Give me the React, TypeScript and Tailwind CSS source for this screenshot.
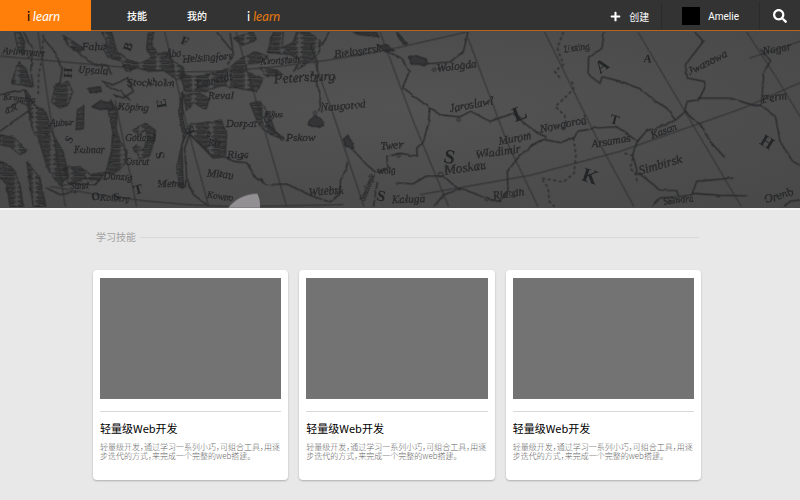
import React from 'react';
import { FaPlus, FaSearch } from 'react-icons/fa';

type Label = [text: string, x: number, y: number, size: number, angle: number];

const labels: Label[] = [
  ['Arimnyan', 6, 78, 32, 3],
  ['Falun', 245, 66, 34, 0],
  ['Upsala', 232, 134, 32, 3],
  ['Stockholm', 382, 174, 34, 0],
  ['Helsingfors', 548, 104, 32, -4],
  ['Åbo', 498, 86, 28, 0],
  ['Köping', 352, 245, 32, 3],
  ['Reval', 624, 214, 34, 0],
  ['Lauwidi', 590, 180, 34, -14],
  ['Aubur', 150, 295, 28, 0],
  ['Kalmar', 222, 374, 30, 0],
  ['Gotland', 376, 340, 28, 0],
  ['Ostrut', 376, 412, 28, 0],
  ['Dorpat', 678, 298, 32, 0],
  ['Riga', 682, 390, 34, 0],
  ['Mitau', 620, 446, 34, 4],
  ['Memel', 474, 478, 32, 0],
  ['Kowno', 620, 508, 28, 8],
  ['a.', 620, 328, 28, 0],
  ['Riv', 625, 354, 28, 0],
  ['Kramma', 8, 216, 28, 5],
  ['d.R', 18, 258, 28, -20],
  ['Sund', 210, 482, 28, 0],
  ['Danzig', 310, 452, 30, 4],
  ['Kolberg', 300, 518, 28, 2],
  ['Kronstadt', 782, 110, 30, -3],
  ['Petersburg', 822, 166, 42, -3],
  ['Bielosersk', 1004, 90, 34, -8],
  ['Naugorod', 962, 250, 34, -5],
  ['Pljus', 795, 266, 26, 2],
  ['Pskow', 858, 338, 34, 0],
  ['Twer', 1142, 366, 34, -5],
  ['Wolg', 1132, 442, 28, -8],
  ['Witebsk', 926, 503, 34, -3],
  ['Wologda', 1312, 132, 34, -7],
  ['Jaroslawl', 1350, 252, 34, -10],
  ['Moskau', 1336, 440, 40, -8],
  ['Wladimir', 1428, 392, 36, -8],
  ['Murom', 1498, 350, 34, -10],
  ['Kaluga', 1176, 526, 34, -2],
  ['Rjasan', 1480, 514, 34, -8],
  ['Smolensk', 1094, 520, 22, -68],
  ['Usting', 1692, 74, 30, -8],
  ['Nowgorod', 1622, 314, 34, -12],
  ['Arsamas', 1776, 360, 34, -10],
  ['Kasan', 1956, 332, 32, -20],
  ['Simbirsk', 1920, 440, 38, -16],
  ['Samara', 1990, 530, 30, -6],
  ['Jwanowa', 2070, 142, 34, -27],
  ['Perm', 2290, 226, 34, -12],
  ['Nagor', 2290, 80, 34, -10],
  ['Orenb', 2296, 526, 36, -16],
];

const capitals: Label[] = [
  ['H', 192, 118, 40, 94],
  ['F', 540, 46, 38, 20],
  ['E', 500, 238, 42, -100],
  ['E', 585, 314, 36, -110],
  ['S', 494, 390, 38, -100],
  ['B', 390, 72, 38, -70],
  ['S', 212, 348, 34, -60],
  ['O', 276, 518, 34, -10],
  ['S', 340, 516, 34, 0],
  ['T', 405, 500, 40, -15],
  ['S', 1328, 402, 60, 12],
  ['S', 1128, 516, 46, 12],
  ['L', 1546, 282, 62, -20],
  ['A', 1800, 138, 52, -35],
  ['K', 1742, 456, 60, 18],
  ['H', 2276, 346, 50, 32],
  ['T', 1828, 284, 40, 15],
  ['A', 1930, 102, 34, 5],
];

/* Baltic coastlines and islands */
const shores = [
  'M305 12 320 40 312 66 325 90 365 98 378 130 412 120 450 130 492 128 530 155 552 150 550 118 520 100 500 72 472 78 455 45 465 12 445 12 440 60 455 90 420 106 385 96 350 70 335 12Z',
  'M540 138 580 146 632 140 690 118 720 92 770 72 800 84 780 104 740 108 735 130 790 150 772 190 718 182 668 172 610 190 555 190Z',
  'M550 200 600 196 628 212 618 244 600 236 580 222 560 250Z',
  'M568 290 642 280 664 276 680 318 676 380 640 386 600 345 568 316Z',
  'M332 215 352 250 348 300 360 340 382 370 372 410 344 440 318 432 334 370 338 310 325 250Z',
  'M398 306 436 286 466 306 462 340 448 384 418 392 398 360 410 350 430 366 446 330 436 306 414 322Z',
  'M58 100 78 122 96 178 62 170 34 168 42 140Z',
  'M168 168 204 160 218 192 204 232 178 240 154 222Z',
  'M232 246 252 232 250 302 228 306Z',
  'M74 186 106 232 140 256 154 310 190 372 206 448 176 470 142 420 118 340 96 300Z',
  'M0 320 44 330 80 370 60 380 30 356 0 350Z',
  'M0 400 40 420 60 470 70 536 30 536 20 470 0 450Z',
  'M80 400 120 450 138 536 100 536 90 470Z',
  'M750 226 780 220 810 264 825 310 845 332 810 318 776 290Z',
  'M820 12 850 12 846 60 880 40 890 12 930 12 962 40 958 74 918 110 880 130 900 96 870 80 830 76 802 74Z',
  'M780 118 830 126 850 140 800 146Z',
  'M548 190 536 250 550 330 530 420 540 480 552 480 548 430 546 350 560 318 548 270Z',
  'M60 12 74 40 70 80 54 66 44 14Z',
  'M190 22 250 60 240 72 204 54Z',
  'M700 30 760 12 770 36 726 52Z',
  'M190 420 240 416 270 440 318 432 300 456 250 452 210 470Z',
];

/* Small filled lakes */
const lakes = [
  'M925 290Q928 268 946 264 968 272 970 292 944 300 925 290Z',
  'M1030 335 1044 322 1062 360 1040 355Z',
  'M1222 88 1244 82 1280 94 1278 110 1240 108Z',
  'M1136 54 1160 50 1180 66 1158 72Z',
  'M260 182 300 176 304 190 270 194Z',
  'M276 236 300 220 330 224 340 242 300 244Z',
  'M1190 12 1222 46 1214 50 1196 28Z',
  'M1060 12 1128 12 1136 26 1080 20Z',
];

const rivers = [
  'M70 12 98 60 92 130 100 176M130 30 170 80 186 130 178 170M212 54 250 84 280 108 322 112 334 140',
  'M0 200 40 190 74 186M0 310 40 280 84 250 100 270M20 240 60 220 90 236M180 470 230 466 280 470 300 456M140 480 180 500 230 492M304 160 340 170 382 150 400 190 370 210 340 200M312 170 360 190 390 216',
  'M568 318 600 350 640 390 676 386 700 400 740 404 768 450 800 470 860 468 910 492 950 510 990 522 1018 500 1022 455 1038 430 1042 402',
  'M568 320 554 360 560 450 580 500 620 530',
  'M930 50 952 102 950 170 962 200 956 250',
  'M960 60 990 12M780 450 790 462M780 236 800 290 850 330',
  'M1160 70 1205 90 1228 130 1208 178 1250 210 1290 240 1330 262 1380 266 1412 250 1470 280 1510 266 1540 256 1566 280 1600 306 1640 330',
  'M1290 240 1284 290 1270 340 1250 360 1252 384 1200 376 1160 386 1164 420 1128 434 1100 410 1056 362',
  'M1188 464 1238 468 1280 444 1330 444 1372 480 1400 486 1464 514 1500 520 1524 490 1522 430 1560 382 1600 350 1628 336',
  'M1380 484 1330 500 1302 536M1278 108 1350 102 1390 70 1404 12',
  'M1590 354 1630 334 1680 344 1724 328 1732 310 1790 300 1850 296 1912 340',
  'M1812 12 1806 60 1766 90 1764 140 1800 166 1806 146 1860 160 1920 182 1970 222 2000 240 2026 276',
  'M1912 340 1940 308 2000 290 2026 276 2054 252 2062 220 2096 216 2114 180 2110 160 2062 150 2056 110 2110 40 2084 12',
  'M2096 210 2190 210 2260 232 2284 232 2292 130 2312 98 2282 64',
  'M2284 232 2326 264 2340 340 2378 400 2400 412',
  'M1912 340 1898 380 1912 432 1960 470 1978 486 2030 488 2036 506 2076 500 2090 460 2200 450M2076 496 2160 502 2246 504',
  'M1956 536 1980 510 2030 506M2054 250 2110 302 2130 340 2174 388M2350 536 2370 520 2400 516',
  'M690 12 700 80 682 110M650 12 694 66M1120 536 1126 500 1132 462',
];

const meridians = [
  'M114 12 146 230 196 536',
  'M345 215 410 536',
  'M494 12 560 290 626 536',
  'M708 12 760 190 860 536',
  'M940 90 1000 260 1092 536',
  'M1140 12 1240 280 1346 536',
  'M1404 30 1520 340 1614 536',
  'M1634 12 1790 330 1902 536',
  'M1914 12 2090 310 2224 536',
  'M2240 12 2330 150 2400 266',
];

const parallels = [
  'M0 84Q250 108 540 132 820 132 1170 64L1400 12',
  'M150 475Q430 530 700 536L1030 530M1260 500 1590 442 1860 370 2230 240 2400 164',
  'M2250 90 2400 40',
];

const borders = [
  'M1690 12 1672 60 1690 110 1664 130 1680 150M1716 160 1720 184 1666 236 1694 262 1700 296',
  'M1720 330 1728 380 1722 436 1690 462 1624 450 1644 480 1648 520 1664 536',
  'M1874 376 1900 384 1890 420 1908 440 1912 468',
  'M130 20 126 90 116 140 114 200',
];

function MapArtwork() {
  return (
    <svg
      className="block h-full w-full"
      viewBox="0 9 2400 531"
      preserveAspectRatio="xMidYMid slice"
      role="img"
      aria-label="Map"
    >
      <defs>
        <pattern id="water" width="53" height="14" patternUnits="userSpaceOnUse">
          <path d="M0 2h20l5 1h22M6 9h37" stroke="#262728" strokeWidth="4" fill="none" />
        </pattern>
        <radialGradient id="light" cx="50%" cy="45%" r="75%">
          <stop offset="0" stopColor="#535353" />
          <stop offset="1" stopColor="#484848" />
        </radialGradient>
        <filter id="rough" x="0" y="0" width="100%" height="100%">
          <feTurbulence type="fractalNoise" baseFrequency="0.04" numOctaves="2" seed="4" />
          <feDisplacementMap in="SourceGraphic" scale="8" xChannelSelector="R" yChannelSelector="G" />
        </filter>
        <filter id="soft" x="0" y="0" width="100%" height="100%">
          <feGaussianBlur stdDeviation="1" />
        </filter>
      </defs>
      <rect y="0" width="2400" height="550" fill="url(#light)" />
      <g filter="url(#soft)" fill="none" stroke="#292a2b" strokeLinejoin="round">
        <g filter="url(#rough)">
          {shores.map((d) => (
            <path key={d} d={d} fill="url(#water)" strokeWidth="3" />
          ))}
          {lakes.map((d) => (
            <path key={d} d={d} fill="#353637" strokeWidth="4" />
          ))}
          {rivers.map((d) => (
            <path key={d} d={d} strokeWidth="4" />
          ))}
        </g>
        {borders.map((d) => (
          <path key={d} d={d} strokeWidth="4" strokeDasharray="9 8" />
        ))}
        {meridians.map((d) => (
          <path key={d} d={d} strokeWidth="3" opacity="0.8" />
        ))}
        {parallels.map((d) => (
          <path key={d} d={d} strokeWidth="3" opacity="0.85" />
        ))}
        <circle cx="847" cy="332" r="5" strokeWidth="3" />
        <circle cx="945" cy="255" r="5" strokeWidth="3" />
        <circle cx="1196" cy="383" r="5" strokeWidth="3" />
        <circle cx="1322" cy="440" r="7" strokeWidth="3" />
        <circle cx="1376" cy="275" r="5" strokeWidth="3" />
        <circle cx="1302" cy="125" r="5" strokeWidth="3" />
        <circle cx="1460" cy="513" r="5" strokeWidth="3" />
        <g
          className="font-['Liberation_Serif',serif] italic"
          fill="#292a2b"
          strokeWidth="1"
          filter="url(#rough)"
        >
          {labels.map(([text, x, y, size, angle]) => (
            <text key={text} x={x} y={y} fontSize={size} transform={`rotate(${angle} ${x} ${y})`}>
              {text}
            </text>
          ))}
        </g>
        <g className="font-['Liberation_Serif',serif] font-bold" fill="#242526" stroke="none">
          {capitals.map(([text, x, y, size, angle]) => (
            <text key={`${text}${x}`} x={x} y={y} fontSize={size} transform={`rotate(${angle} ${x} ${y})`}>
              {text}
            </text>
          ))}
        </g>
      </g>
      <path d="M684 540Q718 498 772 497 782 518 780 540Z" fill="#929093" />
    </svg>
  );
}

function Wordmark({ iClass, textClass }: { iClass: string; textClass: string }) {
  return (
    <span className="flex items-baseline gap-[3px] font-[Lato,sans-serif] text-[13px] leading-4">
      <span className={iClass}>i</span>
      <span className={textClass}>learn</span>
    </span>
  );
}

const skills = [1, 2, 3].map((id) => ({
  id,
  title: '轻量级Web开发',
  text: '轻量级开发，通过学习一系列小巧，可组合工具，用逐步迭代的方式，来完成一个完整的web搭建。',
}));

export default function App() {
  return (
    <div
      lang="zh-CN"
      className="min-h-screen bg-[#e8e8e8] font-['Noto_Sans_CJK_SC',sans-serif]"
    >
      <header className="flex h-[31px] items-stretch border-b border-[#b8621a] bg-[#333]">
        <a href="#home" className="-mb-px flex w-[91px] items-center justify-center bg-[#ff7f0a] pr-1">
          <Wordmark iClass="text-black" textClass="italic text-white" />
        </a>
        <nav className="flex items-center gap-10 pt-0.5 pl-9 text-[10px] leading-4 font-medium text-white">
          <a href="#skills">技能</a>
          <a href="#mine">我的</a>
          <a href="#ilearn">
            <Wordmark iClass="font-normal text-white" textClass="font-normal italic text-[#e8790f]" />
          </a>
        </nav>
        <div className="ml-auto flex items-stretch pt-0.5 text-[10px] text-white">
          <button type="button" className="flex items-center gap-2 border-r border-[#2b2b2b] pr-3">
            <FaPlus size={11} aria-hidden="true" />
            <span>创建</span>
          </button>
          <button
            type="button"
            className="flex items-center gap-2 border-r border-[#2b2b2b] pr-5 pl-5 font-[Roboto,sans-serif]"
          >
            <span className="size-[18px] bg-black" />
            <span>Amelie</span>
          </button>
          <button type="button" aria-label="搜索" className="flex w-10 items-center justify-center">
            <FaSearch size={14} aria-hidden="true" />
          </button>
        </div>
      </header>

      <div className="h-[179px] border-b-2 border-[#f5f5f5] bg-[#4b4b4b]">
        <MapArtwork />
      </div>

      <main className="pt-[19px] pr-[99px] pb-5 pl-[93px]">
        <div className="flex items-center gap-1 pr-0.5 pl-[3px]">
          <h1 className="text-[10px] leading-4 text-[#a3a3a3]">学习技能</h1>
          <div className="h-px flex-1 bg-[#d8d8d8]" />
        </div>
        <div className="mt-[25px] grid grid-cols-3 gap-[11px]">
          {skills.map((skill) => (
            <article key={skill.id} className="rounded bg-white px-[7px] pt-2 pb-5 shadow-[0_1px_2px_rgba(0,0,0,0.25)]">
              <div className="h-[121px] bg-[#737373]" />
              <div className="mt-3 border-t border-[#d9d9d9] pt-1.5">
                <h2 className="text-[11px] leading-5 text-black">{skill.title}</h2>
                <p className="mt-1 text-[8px] leading-[9px] font-light text-[#666] [font-feature-settings:'halt']">
                  {skill.text}
                </p>
              </div>
            </article>
          ))}
        </div>
      </main>
    </div>
  );
}
